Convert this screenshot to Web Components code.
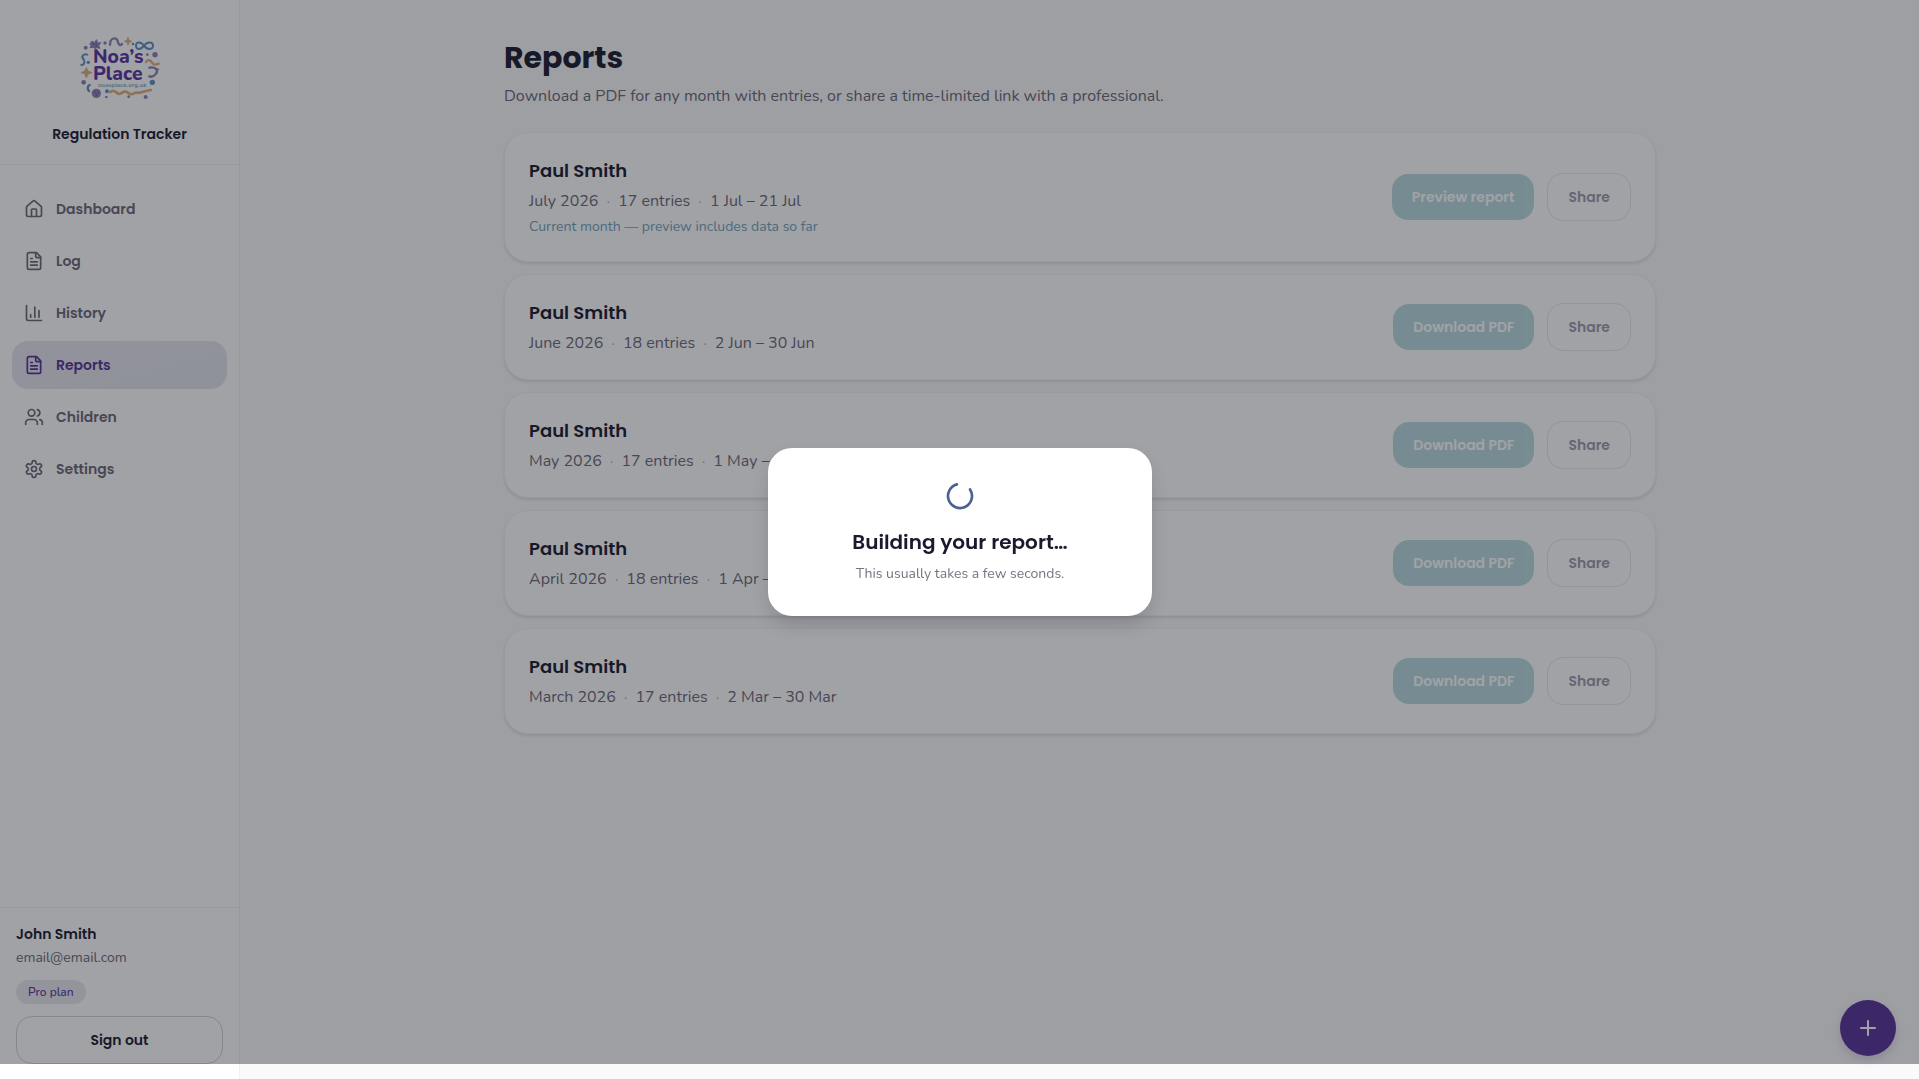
<!DOCTYPE html>
<html lang="en">
<head>
<meta charset="utf-8">
<title>Reports – Regulation Tracker</title>
<style>
  :root {
    --heading: Poppins, Inter, "Liberation Sans", sans-serif;
    --body: Nunito, "Open Sans", "Noto Sans", sans-serif;
    --ink: #1a1a2e;
    --muted: #6b6877;
    --purple: #57349a;
    --line: #f0eff3;
  }
  body { margin: 0; font-family: var(--body); color: var(--ink); background: #fafafa; }
</style>
</head>
<body>
<app-shell>
  <app-sidebar slot="sidebar"></app-sidebar>
  <reports-page>
    <report-card name="Paul Smith" month="July 2026" entries="17 entries" range="1 Jul – 21 Jul" action="Preview report" note="Current month — preview includes data so far"></report-card>
    <report-card name="Paul Smith" month="June 2026" entries="18 entries" range="2 Jun – 30 Jun" action="Download PDF"></report-card>
    <report-card name="Paul Smith" month="May 2026" entries="17 entries" range="1 May – 31 May" action="Download PDF"></report-card>
    <report-card name="Paul Smith" month="April 2026" entries="18 entries" range="1 Apr – 30 Apr" action="Download PDF"></report-card>
    <report-card name="Paul Smith" month="March 2026" entries="17 entries" range="2 Mar – 30 Mar" action="Download PDF"></report-card>
  </reports-page>
  <add-button slot="float"></add-button>
  <loading-dialog slot="float">
    <span slot="title">Building your report…</span>
    <span slot="text">This usually takes a few seconds.</span>
  </loading-dialog>
</app-shell>

<script>
const define = (tag, html) => customElements.define(tag, class extends HTMLElement {
  constructor() {
    super();
    this.attachShadow({ mode: "open" }).innerHTML = typeof html === "function" ? html(this) : html;
  }
});

const ICONS = {
  home: '<path d="M15 21v-8a1 1 0 0 0-1-1h-4a1 1 0 0 0-1 1v8"/><path d="M3 10a2 2 0 0 1 .709-1.528l7-5.999a2 2 0 0 1 2.582 0l7 5.999A2 2 0 0 1 21 10v9a2 2 0 0 1-2 2H5a2 2 0 0 1-2-2z"/>',
  file: '<path d="M15 2H6a2 2 0 0 0-2 2v16a2 2 0 0 0 2 2h12a2 2 0 0 0 2-2V7Z"/><path d="M14 2v4a2 2 0 0 0 2 2h4"/><path d="M10 9H8"/><path d="M16 13H8"/><path d="M16 17H8"/>',
  chart: '<path d="M3 3v16a2 2 0 0 0 2 2h16"/><path d="M18 17V9"/><path d="M13 17V5"/><path d="M8 17v-3"/>',
  users: '<path d="M16 21v-2a4 4 0 0 0-4-4H6a4 4 0 0 0-4 4v2"/><circle cx="9" cy="7" r="4"/><path d="M22 21v-2a4 4 0 0 0-3-3.87"/><path d="M16 3.13a4 4 0 0 1 0 7.75"/>',
  gear: '<path d="M12.22 2h-.44a2 2 0 0 0-2 2v.18a2 2 0 0 1-1 1.73l-.43.25a2 2 0 0 1-2 0l-.15-.08a2 2 0 0 0-2.73.73l-.22.38a2 2 0 0 0 .73 2.73l.15.1a2 2 0 0 1 1 1.72v.51a2 2 0 0 1-1 1.74l-.15.09a2 2 0 0 0-.73 2.73l.22.38a2 2 0 0 0 2.73.73l.15-.08a2 2 0 0 1 2 0l.43.25a2 2 0 0 1 1 1.73V20a2 2 0 0 0 2 2h.44a2 2 0 0 0 2-2v-.18a2 2 0 0 1 1-1.73l.43-.25a2 2 0 0 1 2 0l.15.08a2 2 0 0 0 2.73-.73l.22-.39a2 2 0 0 0-.73-2.73l-.15-.08a2 2 0 0 1-1-1.74v-.5a2 2 0 0 1 1-1.74l.15-.09a2 2 0 0 0 .73-2.73l-.22-.38a2 2 0 0 0-2.73-.73l-.15.08a2 2 0 0 1-2 0l-.43-.25a2 2 0 0 1-1-1.73V4a2 2 0 0 0-2-2z"/><circle cx="12" cy="12" r="3"/>'
};

define("app-shell", `
  <style>
    :host { display: flex; min-height: 100vh; }
    main { flex: 1; min-width: 0; padding-left: 1px; }
  </style>
  <slot name="sidebar"></slot>
  <main><slot></slot></main>
  <slot name="float"></slot>`);

define("brand-logo", `
  <style>
    :host { display: block; }
    svg { display: block; width: 120px; height: 90px; }
  </style>
  <svg viewBox="0 0 360 270" role="img" aria-label="Noa's Place" fill="none" stroke-linecap="round" stroke-linejoin="round">
    <text font-family="Nunito, Lato, sans-serif" font-weight="800" font-size="58" fill="#5b35a0"><tspan x="99" y="128">Noa’s</tspan><tspan x="99" y="180">Place</tspan></text>
    <text x="114" y="200" font-family="DejaVu Sans, sans-serif" font-size="15" fill="#8ab4c6">noasplace.org.uk</text>
    <path d="M90 72l6-9 6 5 8-9 2 10 10-1-6 9 4 8-10-2-6 3-4-4-10 1 4-7z" fill="#8a82b4" stroke="#8a82b4" stroke-width="3"/>
    <g fill="#8a82b4">
      <circle cx="77" cy="83" r="6"/><circle cx="285" cy="104" r="8"/><circle cx="71" cy="187" r="7"/>
      <circle cx="109" cy="220" r="14"/><circle cx="294" cy="148" r="3"/><circle cx="139" cy="231" r="4"/><circle cx="262" cy="104" r="4"/>
    </g>
    <g fill="#5c8fc6">
      <circle cx="135" cy="69" r="5"/><circle cx="219" cy="72" r="4"/><circle cx="85" cy="127" r="5"/>
      <circle cx="277" cy="187" r="8"/><circle cx="141" cy="214" r="6"/><circle cx="206" cy="230" r="4"/>
    </g>
    <g fill="#5a4a90">
      <circle cx="101" cy="71" r="2"/><circle cx="109" cy="75" r="2"/><circle cx="104" cy="216" r="2"/><circle cx="114" cy="216" r="2"/><circle cx="109" cy="225" r="2"/>
    </g>
    <circle cx="257" cy="231" r="6" fill="#8a82b4"/>
    <path d="M150 74c0-22 20-24 23-10 2 10 8 14 13 8" stroke="#8a82b4" stroke-width="7"/>
    <path d="M268 143c18-4 28 8 20 18-6 8-14 11-20 8" stroke="#8a82b4" stroke-width="7"/>
    <path d="M252 77c-8-12-24-14-24 0s16 12 24 0 27-14 27 0-19 12-27 0z" stroke="#5c8fc6" stroke-width="6"/>
    <path d="M82 104c-12-4-19 6-12 13 6 6 4 18-6 18" stroke="#5c8fc6" stroke-width="6"/>
    <path d="M89 195c-8 4-7 12-2 18" stroke="#5c8fc6" stroke-width="7"/>
    <path d="M258 126c6-10 14-5 18 2s10 8 20 3" stroke="#e0b078" stroke-width="7"/>
    <path d="M151 216c10-10 17 2 24 5 10 3 13-9 23-6 9 3 13 11 22 6 8-5 11-2 20-3 9-1 12-6 33-8" stroke="#e0b078" stroke-width="8"/>
    <path d="M204 53l3 8 8 3-8 3-3 8-3-8-8-3 8-3z" fill="#e0b078" stroke="#e0b078" stroke-width="3"/>
    <path d="M79 144l5 10 10 4-10 4-5 10-4-10-10-4 10-4z" fill="#e0b078" stroke="#e0b078" stroke-width="4"/>
  </svg>`);

define("nav-item", el => `
  <style>
    :host { display: block; }
    a { display: flex; align-items: center; gap: 12px; height: 48px; padding: 0 12px; border-radius: 16px;
        font: 600 14px/20px var(--heading); color: var(--muted); text-decoration: none; }
    a[aria-current] { background: linear-gradient(165deg, #e6e5ee 30%, #e2e6ea 70%); color: var(--purple); }
    svg { width: 20px; height: 20px; }
  </style>
  <a href="#" ${el.hasAttribute("active") ? 'aria-current="page"' : ""}>
    <svg viewBox="0 0 24 24" fill="none" stroke="currentColor" stroke-width="2" stroke-linecap="round" stroke-linejoin="round" aria-hidden="true">${ICONS[el.getAttribute("icon")]}</svg>
    <slot></slot>
  </a>`);

define("app-sidebar", `
  <style>
    :host { display: flex; flex-direction: column; box-sizing: border-box; width: 240px; height: 100vh; background: #fff; border-right: 1px solid var(--line); }
    header { display: flex; flex-direction: column; align-items: center; gap: 14px; padding: 20px 16px; border-bottom: 1px solid var(--line);
             font: 600 14px/20px var(--heading); }
    nav { flex: 1; display: flex; flex-direction: column; gap: 4px; padding: 20px 12px; }
    footer { display: flex; flex-direction: column; align-items: flex-start; padding: 16px 16px 15px; border-top: 1px solid var(--line); }
    .name { font: 600 14px/20px var(--heading); }
    .mail { font-size: 14px; line-height: 20px; color: var(--muted); margin-top: 4px; }
    .plan { font-size: 12px; font-weight: 500; line-height: 16px; padding: 4px 12px; border-radius: 12px; background: #e9e8f0; color: var(--purple); margin: 12px 0; }
    button { width: 100%; height: 48px; border: 1px solid #d2d0da; border-radius: 16px; background: none; color: var(--ink); font: 600 14px/20px var(--heading); }
  </style>
  <header><brand-logo></brand-logo><span>Regulation Tracker</span></header>
  <nav aria-label="Main">
    <nav-item icon="home">Dashboard</nav-item>
    <nav-item icon="file">Log</nav-item>
    <nav-item icon="chart">History</nav-item>
    <nav-item icon="file" active>Reports</nav-item>
    <nav-item icon="users">Children</nav-item>
    <nav-item icon="gear">Settings</nav-item>
  </nav>
  <footer>
    <span class="name">John Smith</span>
    <span class="mail">email@email.com</span>
    <span class="plan">Pro plan</span>
    <button type="button">Sign out</button>
  </footer>`);

define("reports-page", `
  <style>
    :host { display: block; max-width: 1152px; margin: 0 auto; padding: 40px 24px; }
    h1 { margin: 0; font: 700 30px/36px var(--heading); }
    p { margin: 8px 0 24px; font-size: 16px; line-height: 24px; color: var(--muted); }
    section { display: flex; flex-direction: column; gap: 12px; }
  </style>
  <h1>Reports</h1>
  <p>Download a PDF for any month with entries, or share a time-limited link with a professional.</p>
  <section><slot></slot></section>`);

define("report-card", el => {
  const v = n => el.getAttribute(n);
  return `
  <style>
    :host { display: flex; align-items: center; gap: 13px; padding: 24px; background: #fff; border: 1px solid #f3f2f6; border-radius: 24px;
            box-shadow: 0 2px 3px rgba(26,26,46,.11); }
    .info { flex: 1; }
    h2 { margin: 0; font: 600 18px/28px var(--heading); }
    .meta { display: flex; gap: 8px; margin-top: 4px; font-size: 16px; line-height: 24px; color: var(--muted); }
    .meta i { font-style: normal; opacity: .5; }
    .note { margin-top: 4px; font-size: 14px; line-height: 20px; color: #70a3bc; }
    button { height: 48px; padding: 0 20px; border-radius: 16px; font: 600 14px/20px var(--heading); opacity: .5; }
    .main { height: 46px; border: 0; background: #74b9be; color: #fff; }
    .share { border: 1px solid #d2d0da; background: none; color: #3f3358; }
  </style>
  <div class="info">
    <h2>${v("name")}</h2>
    <div class="meta"><span>${v("month")}</span><i>·</i><span>${v("entries")}</span><i>·</i><span>${v("range")}</span></div>
    ${v("note") ? `<div class="note">${v("note")}</div>` : ""}
  </div>
  <button class="main" type="button" disabled>${v("action")}</button>
  <button class="share" type="button" disabled>Share</button>`;
});

define("add-button", `
  <style>
    :host { display: block; position: fixed; right: 23px; bottom: 23px; }
    button { display: grid; place-items: center; width: 56px; height: 56px; padding: 0; border: 0; border-radius: 50%; background: var(--purple);
             box-shadow: 0 4px 10px rgba(91,53,148,.2); }
    svg { width: 24px; height: 24px; }
  </style>
  <button type="button" aria-label="Add entry">
    <svg viewBox="0 0 24 24" fill="none" stroke="#fff" stroke-width="2" stroke-linecap="round"><path d="M5 12h14M12 5v14"/></svg>
  </button>`);

define("loading-dialog", `
  <style>
    :host { position: fixed; inset: 0 -1px 15px 0; display: grid; place-items: center; background: rgba(20,22,33,.4); }
    div { box-sizing: border-box; width: 384px; max-width: 100%; padding: 32px; display: flex; flex-direction: column; align-items: center;
          background: #fff; border-radius: 24px; box-shadow: 0 10px 20px -4px rgba(26,26,46,.22); }
    svg { width: 32px; height: 32px; }
    h2 { margin: 16px 0 8px; font: 600 20px/28px var(--heading); }
    p { margin: 0; font-size: 14px; line-height: 20px; color: #767482; }
  </style>
  <div role="dialog" aria-modal="true" aria-labelledby="t">
    <svg viewBox="0 0 24 24" fill="none" stroke="#4a6490" stroke-width="2" stroke-linecap="round" aria-hidden="true"><path transform="rotate(-33 12 12)" d="M21 12a9 9 0 1 1-6.219-8.56"/></svg>
    <h2 id="t"><slot name="title"></slot></h2>
    <p><slot name="text"></slot></p>
  </div>`);
</script>
</body>
</html>
